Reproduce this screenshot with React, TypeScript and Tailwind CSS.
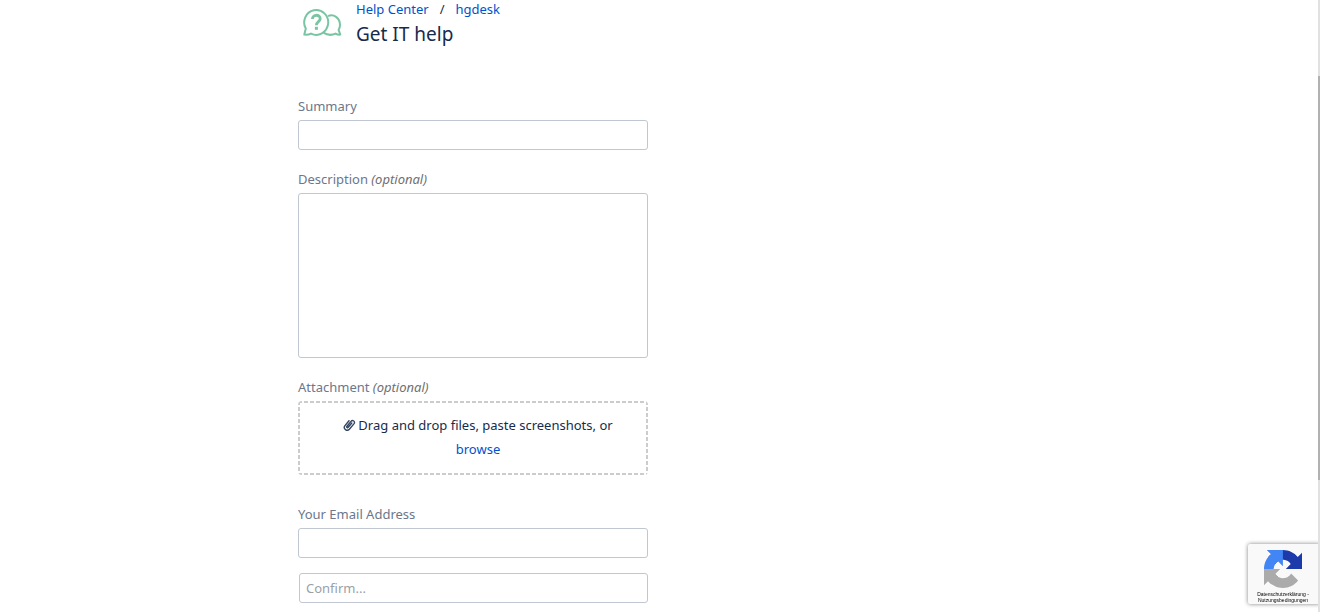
import { useState } from "react";

const inputClass =
  "block h-[30px] w-full rounded-[3px] border border-[#c1c7d0] bg-white px-1.5 text-[13px] text-[#172b4d] placeholder:text-[#9a9fa8] outline-none focus:border-[#4c9aff]";

const labelClass = "mb-1 block leading-5 text-[#6b778c]";

function HelpIcon() {
  return (
    <svg width="40" height="30" viewBox="0 0 40 30" fill="none" stroke="#79c5a3" strokeWidth="2" strokeLinejoin="round">
      <path d="M2.3 26.6 L3.8 20.6 A12 12.4 0 1 1 9 25.6 C7 26.6 4.8 26.9 2.3 26.6 Z" />
      <path d="M26 8.2 C31.5 5.4 38 10 38 17 C38 19 37.4 20.6 36.6 21.8 L38.3 26.6 C36.4 26.8 35 26.5 33.6 25.6 C29.8 27.4 25 27 21.4 24.6" />
      <path d="M10.4 11.1 C10.4 6 18.3 6.1 18.2 10.8 C18.2 13.6 14.4 13.8 14.4 17.2" strokeWidth="2.8" />
      <path d="M14.4 18.8 V21.8" strokeWidth="3" />
    </svg>
  );
}

function PaperclipIcon() {
  return (
    <svg
      width="13"
      height="14"
      viewBox="0 0 13 14"
      fill="none"
      stroke="#344563"
      strokeWidth="1.4"
      strokeLinecap="round"
      className="inline-block align-[-2px]"
    >
      <path d="M8.8 5 L5.2 9.3 C4.4 10.3 3.2 9.3 4 8.3 L8 3.4 C9.6 1.5 12.6 3.5 11.1 5.6 L6.4 11.2 C4 13.7 -0.2 10.8 1.8 7.8 L6 2.7" />
    </svg>
  );
}

function RecaptchaLogo() {
  return (
    <svg width="38" height="38" viewBox="0 0 64 64">
      <path
        fill="#1c3aa9"
        d="M64 31.955l-.033-1.37V4.687l-7.16 7.16C50.948 4.674 42.033.093 32.05.093c-10.4 0-19.622 4.96-25.458 12.64l11.736 11.86a15.55 15.55 0 0 1 4.754-5.334c2.05-1.6 4.952-2.906 8.968-2.906.485 0 .86.057 1.135.163 4.976.393 9.288 3.14 11.828 7.124l-8.307 8.307L64 31.953"
      />
      <path
        fill="#4285f4"
        d="M31.862.094l-1.37.033H4.594l7.16 7.16C4.58 13.147 0 22.06 0 32.046c0 10.4 4.96 19.622 12.64 25.458L24.5 45.768a15.55 15.55 0 0 1-5.334-4.754c-1.6-2.05-2.906-4.952-2.906-8.968 0-.485.057-.86.163-1.135.393-4.976 3.14-9.288 7.124-11.828l8.307 8.307L31.86.095"
      />
      <path
        fill="#ababab"
        d="M.001 32.045l.033 1.37v25.898l7.16-7.16c5.86 7.173 14.774 11.754 24.76 11.754 10.4 0 19.622-4.96 25.458-12.64l-11.736-11.86a15.55 15.55 0 0 1-4.754 5.334c-2.05 1.6-4.952 2.906-8.968 2.906-.485 0-.86-.057-1.135-.163-4.976-.393-9.288-3.14-11.828-7.124l8.307-8.307c-10.522.04-22.4.066-27.295-.005"
      />
    </svg>
  );
}

export default function App() {
  const [summary, setSummary] = useState("");
  const [description, setDescription] = useState("");
  const [email, setEmail] = useState("");
  const [confirm, setConfirm] = useState("");

  return (
    <div className="min-h-screen bg-white font-['Noto_Sans',sans-serif] text-[13px] text-[#172b4d]">
      <main className="mx-auto max-w-[724px] pb-2">
        {/* Header */}
        <header className="flex gap-3.5">
          <div className="pt-2 pl-1">
            <HelpIcon />
          </div>
          <div>
            <nav aria-label="Breadcrumb" className="flex gap-[11px] leading-[18px]">
              <a href="#help-center" className="text-[#0052cc] hover:underline">
                Help Center
              </a>
              <span>/</span>
              <a href="#hgdesk" className="text-[#0052cc] hover:underline">
                hgdesk
              </a>
            </nav>
            <h1 className="text-[19px] leading-8">Get IT help</h1>
          </div>
        </header>

        {/* Request form */}
        <form className="mt-[46px] w-full max-w-[350px]" onSubmit={(e) => e.preventDefault()}>
          <div className="mb-[19px]">
            <label htmlFor="summary" className={labelClass}>
              Summary
            </label>
            <input
              id="summary"
              type="text"
              className={inputClass}
              value={summary}
              onChange={(e) => setSummary(e.target.value)}
            />
          </div>

          <div className="mb-[19px]">
            <label htmlFor="description" className={labelClass}>
              Description <em className="text-[#707070]">(optional)</em>
            </label>
            <textarea
              id="description"
              className="block h-[165px] w-full resize-none rounded-[3px] border border-[#c1c7d0] bg-white p-1.5 outline-none focus:border-[#4c9aff]"
              value={description}
              onChange={(e) => setDescription(e.target.value)}
            />
          </div>

          <div className="mb-[29px]">
            <label htmlFor="attachment" className={labelClass}>
              Attachment <em className="text-[#707070]">(optional)</em>
            </label>
            {/* Short-dash outline, one gradient per side */}
            <div className="rounded-[4px] bg-[repeating-linear-gradient(90deg,#ccc_0_4px,transparent_4px_6px),repeating-linear-gradient(90deg,#ccc_0_4px,transparent_4px_6px),repeating-linear-gradient(180deg,#ccc_0_4px,transparent_4px_6px),repeating-linear-gradient(180deg,#ccc_0_4px,transparent_4px_6px)] bg-[length:100%_2px,100%_2px,2px_100%,2px_100%] bg-[position:top,bottom,left,right] bg-no-repeat pt-3 pr-0.5 pb-3.5 pl-3 text-center leading-6">
              <div>
                <PaperclipIcon />
                <span className="ml-0.5">Drag and drop files, paste screenshots, or</span>
              </div>
              <label htmlFor="attachment" className="block cursor-pointer text-[#0052cc] hover:underline">
                browse
              </label>
              <input id="attachment" type="file" multiple className="sr-only" />
            </div>
          </div>

          <div className="mb-[15px]">
            <label htmlFor="email" className={labelClass}>
              Your Email Address
            </label>
            <input
              id="email"
              type="email"
              className={inputClass}
              value={email}
              onChange={(e) => setEmail(e.target.value)}
            />
          </div>

          <div className="pl-px">
            <input
              type="email"
              aria-label="Confirm email address"
              placeholder="Confirm..."
              className={inputClass}
              value={confirm}
              onChange={(e) => setConfirm(e.target.value)}
            />
          </div>
        </form>
      </main>

      {/* Captcha badge */}
      <aside className="fixed right-0 bottom-2 flex h-[60px] w-[72px] flex-col items-center overflow-hidden rounded-l-[2px] bg-[#f9f9f9] pt-1.5 pr-0.5 shadow-[0_0_4px_#808080]">
        <RecaptchaLogo />
        <div className="mt-[3px] text-center font-['Liberation_Sans',sans-serif] text-[5px] leading-[6px] whitespace-nowrap text-black">
          <a href="#privacy">Datenschutzerklärung</a> -<br />
          <a href="#terms">Nutzungsbedingungen</a>
        </div>
      </aside>

      {/* Scroll track */}
      <div className="fixed inset-y-0 right-0 w-0.5 bg-[#e1e1e1] pt-[76px]">
        <div className="h-[404px] bg-[#b1b1b1]" />
      </div>
    </div>
  );
}
